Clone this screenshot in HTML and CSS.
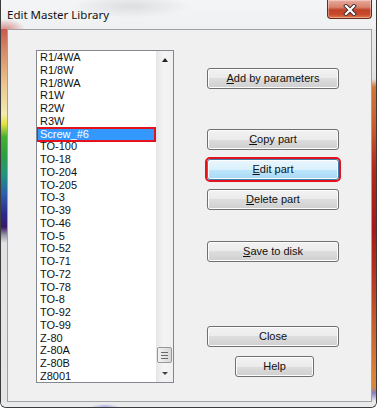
FILE: index.html
```html
<!DOCTYPE html>
<html lang="en">
<head>
    <meta charset="UTF-8">
    <meta name="viewport" content="width=device-width, initial-scale=1.0">
    <title>Edit Master Library</title>
    <link rel="stylesheet" href="styles.css">
</head>
<body>
    <div class="window">
        <!-- Title bar -->
        <div class="titlebar">
            <span class="title">Edit Master Library</span>
            <div class="close-btn">
                <svg width="14" height="12" viewBox="0 0 14 12">
                    <path d="M3 2 L11 10 M11 2 L3 10" stroke="#3a2a2a" stroke-width="4" stroke-linecap="square"/>
                    <path d="M3 2 L11 10 M11 2 L3 10" stroke="#fff" stroke-width="2.2" stroke-linecap="square"/>
                </svg>
            </div>
        </div>

        <div class="frame-row">
            <div class="frame-left"></div>

            <div class="client">
                <!-- Part list -->
                <div class="listbox">
                    <div class="items">
                        <div class="item">R1/4WA</div>
                        <div class="item">R1/8W</div>
                        <div class="item">R1/8WA</div>
                        <div class="item">R1W</div>
                        <div class="item">R2W</div>
                        <div class="item">R3W</div>
                        <div class="item selected">Screw_#6</div>
                        <div class="item">TO-100</div>
                        <div class="item">TO-18</div>
                        <div class="item">TO-204</div>
                        <div class="item">TO-205</div>
                        <div class="item">TO-3</div>
                        <div class="item">TO-39</div>
                        <div class="item">TO-46</div>
                        <div class="item">TO-5</div>
                        <div class="item">TO-52</div>
                        <div class="item">TO-71</div>
                        <div class="item">TO-72</div>
                        <div class="item">TO-78</div>
                        <div class="item">TO-8</div>
                        <div class="item">TO-92</div>
                        <div class="item">TO-99</div>
                        <div class="item">Z-80</div>
                        <div class="item">Z-80A</div>
                        <div class="item">Z-80B</div>
                        <div class="item">Z8001</div>
                    </div>
                    <div class="scrollbar">
                        <div class="arrow"><span class="tri-up"></span></div>
                        <div class="track">
                            <div class="thumb">
                                <span></span><span></span><span></span>
                            </div>
                        </div>
                        <div class="arrow"><span class="tri-down"></span></div>
                    </div>
                </div>

                <!-- Buttons -->
                <div class="actions">
                    <div class="btn btn-add"><u>A</u>dd by parameters</div>
                    <div class="btn btn-copy"><u>C</u>opy part</div>
                    <div class="btn btn-edit"><u>E</u>dit part</div>
                    <div class="btn btn-delete"><u>D</u>elete part</div>
                    <div class="btn btn-save"><u>S</u>ave to disk</div>
                    <div class="btn btn-close">Close</div>
                    <div class="btn btn-help">Help</div>
                </div>
            </div>

            <div class="frame-right"></div>
        </div>

        <div class="frame-bottom"></div>
    </div>
</body>
</html>
```

FILE: styles.css
```css
body {
    margin: 0;
    background-color: #fff;
    font-family: "Liberation Sans", Arial, sans-serif;
}
.window {
    width: 375px;
    height: 407px;
    border: 1px solid #3c3c3c;
    border-top: none;
    border-radius: 0 0 6px 6px;
    background-color: #eef0f2;
    display: flex;
    flex-direction: column;
    overflow: hidden;
}

/* title bar */
.titlebar {
    height: 29px;
    display: flex;
    justify-content: space-between;
    align-items: flex-start;
    background:
        radial-gradient(ellipse 20px 10px at 4px 29px, rgba(200, 80, 70, 0.6), rgba(200, 80, 70, 0)),
        radial-gradient(ellipse 60px 12px at 130px 6px, rgba(120, 120, 120, 0.18), rgba(120, 120, 120, 0)),
        linear-gradient(#f4f5f7, #eef0f2);
}
.title {
    padding: 7px 0 0 6px;
    font-family: "Noto Sans", "Open Sans", sans-serif;
    font-size: 11.5px;
    line-height: 16px;
    color: #111;
}
.close-btn {
    width: 45px;
    height: 19px;
    margin-right: 4px;
    border: 1px solid #6a2a20;
    border-top: none;
    border-radius: 0 0 4px 4px;
    background: linear-gradient(#e9aa9c 0%, #d9826c 40%, #c0432a 55%, #c84a2c 80%, #e07a48 100%);
    box-shadow: inset 0 0 0 1px rgba(255, 255, 255, 0.35);
    display: flex;
    align-items: center;
    justify-content: center;
    padding-top: 2px;
    box-sizing: border-box;
}

/* frame around the client area */
.frame-row {
    display: flex;
    flex: 1;
}
.frame-left {
    width: 6px;
    background: linear-gradient(#c85a50 0px, #d68a68 22px, #ecc590 55px, #f2eab0 85px,
        #e6e040 95px, #42b032 108px, #2ea040 125px, #20967e 145px, #2c5eb0 165px,
        #2a2a8c 185px, #3a1868 198px, #9a96a8 206px, #e2e2e4 214px, #e6e6e8 100%);
}
.frame-right {
    width: 4px;
    background: linear-gradient(#e8eaec 0px, #e4e2e0 50px, #d07838 58px, #c85a2c 100px,
        #b02a1e 140px, #a81818 200px, #b43020 240px, #c45a2c 290px, #d8823a 345px,
        #d88a40 358px, #8a80c0 364px, #e6e8ec 372px);
}
.frame-bottom {
    height: 5px;
    background: radial-gradient(ellipse 14px 3px at 104px 5px, rgba(100, 100, 220, 0.5), rgba(100, 100, 220, 0)),
        #e8eaec;
}
.client {
    width: 363px;
    height: 371px;
    border: 1px solid #a0a0a0;
    background-color: #f0f0f0;
    display: flex;
    align-items: flex-start;
    padding: 20px 0 0 28px;
    box-sizing: content-box;
    margin: 0;
}
.client {
    width: 335px;
    height: 351px;
}

/* list box */
.listbox {
    width: 136px;
    height: 331px;
    border: 1px solid #828790;
    background-color: #fff;
    display: flex;
}
.items {
    flex: 1;
    overflow: hidden;
    font-size: 11px;
    color: #111;
}
.item {
    height: 12.75px;
    line-height: 13px;
    padding-left: 3px;
    white-space: nowrap;
    position: relative;
}
.item.selected {
    background-color: #3399ff;
    color: #fff;
}
.item.selected::after {
    content: "";
    position: absolute;
    top: -1px;
    bottom: -2px;
    left: -1px;
    right: 0;
    border: 2px solid #e3121c;
}
.scrollbar {
    width: 17px;
    display: flex;
    flex-direction: column;
    background: linear-gradient(90deg, #e8e8e8, #f4f4f4 40%, #f0f0f0);
    border-left: 1px solid #e6e6e6;
    box-sizing: border-box;
}
.arrow {
    height: 17px;
    display: flex;
    align-items: center;
    justify-content: center;
}
.tri-up {
    border-left: 3px solid transparent;
    border-right: 3px solid transparent;
    border-bottom: 4px solid #222;
}
.tri-down {
    border-left: 3px solid transparent;
    border-right: 3px solid transparent;
    border-top: 3px solid #444;
}
.track {
    flex: 1;
    display: flex;
    flex-direction: column;
    justify-content: flex-end;
}
.thumb {
    height: 14px;
    margin: 0 1px 2px 0;
    border: 1px solid #979797;
    border-radius: 2px;
    background: linear-gradient(90deg, #f2f2f2, #e4e4e4 50%, #d8d8d8);
    display: flex;
    flex-direction: column;
    justify-content: center;
    align-items: center;
    gap: 2px;
}
.thumb span {
    width: 7px;
    height: 1px;
    background-color: #6a6a6a;
}

/* buttons */
.actions {
    width: 132px;
    margin: 18px 0 0 33px;
    display: flex;
    flex-direction: column;
}
.btn {
    height: 21px;
    box-sizing: border-box;
    border: 1px solid #707070;
    border-radius: 3px;
    background: linear-gradient(#f2f2f2 0%, #ebebeb 50%, #dddddd 50%, #cfcfcf 100%);
    box-shadow: inset 0 0 0 1px #fcfcfc;
    font-size: 11px;
    line-height: 19px;
    text-align: center;
    color: #111;
}
.btn u {
    text-decoration-thickness: 1px;
    text-underline-offset: 1px;
}
.btn-copy {
    margin-top: 40px;
}
.btn-edit {
    margin-top: 9px;
    border-color: #3c7fb1;
    background: linear-gradient(#eaf6fd 0%, #d9f0fc 50%, #bee6fd 50%, #a7d9f5 100%);
    outline: 2px solid #e3121c;
}
.btn-delete {
    margin-top: 9px;
}
.btn-save {
    margin-top: 31px;
}
.btn-close {
    margin-top: 64px;
}
.btn-help {
    margin: 9px 0 0 28px;
    width: 79px;
}
```
